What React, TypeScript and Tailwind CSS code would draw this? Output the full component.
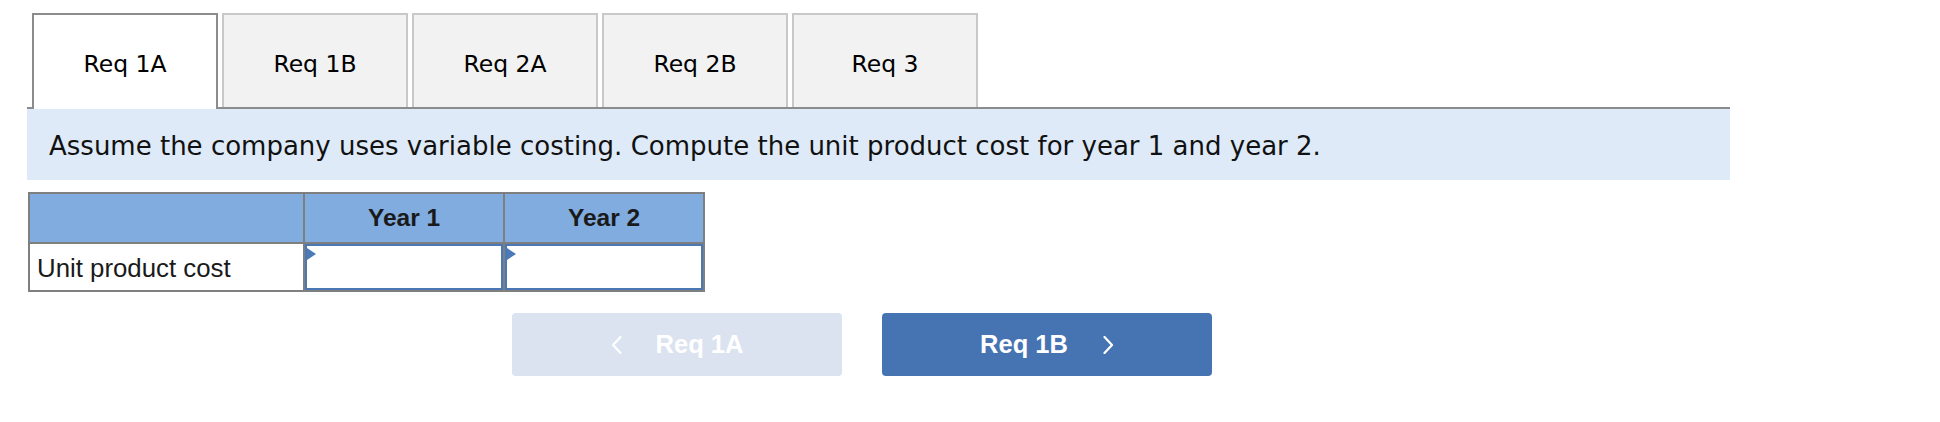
import React from 'react';

const tabs = ['Req 1A', 'Req 1B', 'Req 2A', 'Req 2B', 'Req 3'];

const Chevron = ({ dir }: { dir: 'left' | 'right' }) => (
  <svg width="11" height="18" viewBox="0 0 11 18" fill="none">
    {dir === 'left' ? (
      <polyline points="9.5,1 2,9 9.5,17" stroke="white" strokeWidth="2.2" strokeLinecap="round" strokeLinejoin="round" />
    ) : (
      <polyline points="1.5,1 9,9 1.5,17" stroke="white" strokeWidth="2.2" strokeLinecap="round" strokeLinejoin="round" />
    )}
  </svg>
);

const InputCell = () => (
  <td className="border-2 border-[#7f7f7f] p-0 h-[46px]">
    <div className="relative h-[46px] border-2 border-[#4a78b5] bg-white">
      <span className="absolute left-0 top-[2px] w-0 h-0 border-y-[6px] border-y-transparent border-l-[9px] border-l-[#4a7ab8]" />
    </div>
  </td>
);

export default function App() {
  return (
    <div className="w-[1940px] h-[422px] bg-white pt-[13px] pl-[27px]">
      {/* Tabs */}
      <div className="w-[1703px] flex items-end gap-[4px] pl-[5px] border-b-2 border-[#8c8c8c] font-['DejaVu_Sans',sans-serif] text-[23.5px] text-black">
        {tabs.map((t, i) =>
          i === 0 ? (
            <div
              key={t}
              className="w-[186px] h-[96px] -mb-[2px] border-2 border-b-0 border-[#8c8c8c] bg-white flex items-center justify-center pt-[5px]"
            >
              {t}
            </div>
          ) : (
            <div
              key={t}
              className="w-[186px] h-[94px] border-2 border-b-0 border-[#c8c8c8] bg-[#f2f2f2] flex items-center justify-center pt-[7px]"
            >
              {t}
            </div>
          )
        )}
      </div>

      {/* Question */}
      <div className="w-[1703px] h-[71px] bg-[#deeaf7] flex items-center pl-[22px] pt-[3px] font-['DejaVu_Sans',sans-serif] text-[26px] text-[#111]">
        Assume the company uses variable costing. Compute the unit product cost for year 1 and year 2.
      </div>

      {/* Answer table */}
      <table className="mt-[12px] ml-[1px] w-[675px] table-fixed border-collapse border-2 border-[#7f7f7f] font-['Liberation_Sans',Arial,sans-serif] text-[24.5px] text-[#1a1a1a]">
        <colgroup>
          <col className="w-[275px]" />
          <col className="w-[200px]" />
          <col className="w-[200px]" />
        </colgroup>
        <thead>
          <tr className="bg-[#80acdf] h-[50px]">
            <th className="border-2 border-[#7f7f7f]" />
            <th className="border-2 border-[#7f7f7f] font-bold text-center">Year 1</th>
            <th className="border-2 border-[#7f7f7f] font-bold text-center">Year 2</th>
          </tr>
        </thead>
        <tbody>
          <tr>
            <td className="border-2 border-[#7f7f7f] pl-[7px] pt-[2px] text-[25.8px] text-left">Unit product cost</td>
            <InputCell />
            <InputCell />
          </tr>
        </tbody>
      </table>

      {/* Navigation */}
      <div className="mt-[21px] pl-[485px] flex gap-[40px] font-['Liberation_Sans',Arial,sans-serif] font-bold text-[25.5px] text-white">
        <button className="w-[330px] h-[63px] rounded-[4px] bg-[#dae3ef] flex items-center justify-center gap-[34px]">
          <Chevron dir="left" />
          <span>Req 1A</span>
        </button>
        <button className="w-[330px] h-[63px] rounded-[4px] bg-[#4674b3] flex items-center justify-center gap-[35px]">
          <span>Req 1B</span>
          <Chevron dir="right" />
        </button>
      </div>
    </div>
  );
}
